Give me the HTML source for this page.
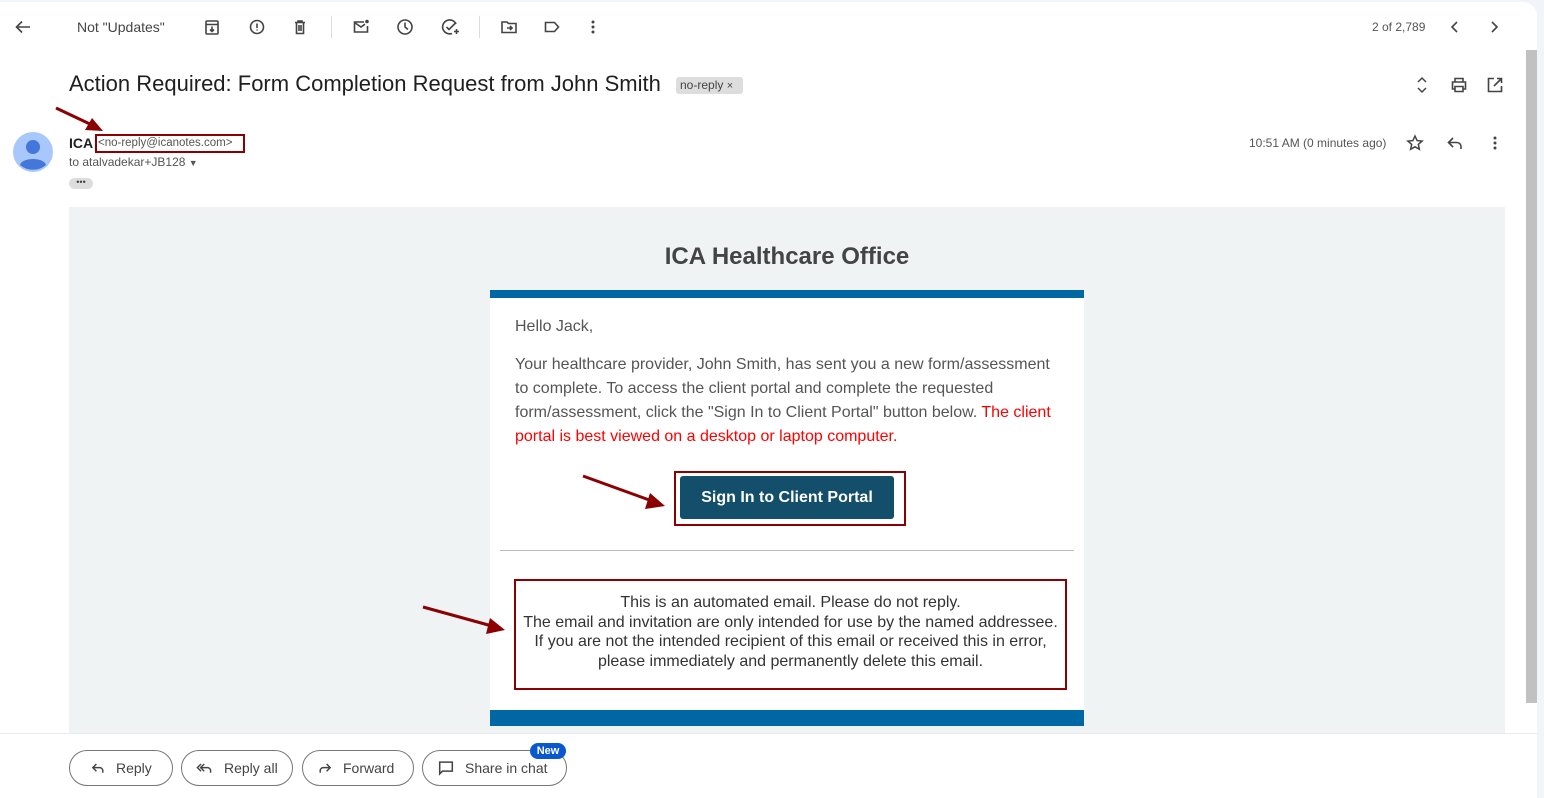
<!DOCTYPE html>
<html><head><meta charset="utf-8"><style>
*{box-sizing:border-box;margin:0;padding:0}
body{width:1544px;height:798px;overflow:hidden;background:#f1f4f9;font-family:"Liberation Sans",Arial,sans-serif;position:relative}
.a{position:absolute}
.panel{left:0;top:2px;width:1537px;height:796px;background:#fff;border-top-right-radius:14px}
.ic{position:absolute;width:20px;height:20px}
.t{white-space:nowrap;position:absolute}
.btn{position:absolute;top:750px;height:36px;border:1px solid #747775;border-radius:18px;font-size:14px;color:#444;display:flex;align-items:center;padding-left:20px}
.btn svg{margin-right:10px}
</style></head><body>
<div class="a panel"></div>
<div class="a" style="left:1526px;top:50px;width:11px;height:653px;background:#c1c1c1"></div>

<!-- toolbar -->
<svg class="ic" style="left:13px;top:17px" viewBox="0 0 20 20"><path d="M17 10H4M9 4.5L3.5 10 9 15.5" stroke="#444" stroke-width="1.6" fill="none"/></svg>
<div class="t" style="left:77px;top:19px;font-size:14px;color:#444">Not "Updates"</div>
<svg class="ic" style="left:202px;top:17px" viewBox="0 0 20 20" fill="none" stroke="#444" stroke-width="1.6"><rect x="4" y="4" width="12" height="13" rx="1"/><path d="M4 7.5h12M10 9.5v5M8 12.5l2 2 2-2"/></svg>
<svg class="ic" style="left:247px;top:17px" viewBox="0 0 20 20" fill="none" stroke="#444" stroke-width="1.6"><circle cx="10" cy="10" r="6.5"/><path d="M10 6.5v4.5M10 12.5v1"/></svg>
<svg class="ic" style="left:290px;top:17px" viewBox="0 0 20 20" fill="none" stroke="#444" stroke-width="1.6"><path d="M5 5.5h10M8 5.5V4h4v1.5M6.5 5.5v11h7v-11M9 8v6M11 8v6"/></svg>
<div class="a" style="left:331px;top:16px;width:1px;height:22px;background:#ddd"></div>
<svg class="ic" style="left:351px;top:17px" viewBox="0 0 20 20" fill="none" stroke="#444" stroke-width="1.6"><path d="M13 5H3.5v10h13V9"/><path d="M3.5 5.5l6.5 4.5 4-2.8"/><circle cx="16" cy="4.5" r="1.8" fill="#444" stroke="none"/></svg>
<svg class="ic" style="left:395px;top:17px" viewBox="0 0 20 20" fill="none" stroke="#444" stroke-width="1.6"><circle cx="10" cy="10" r="7"/><path d="M10 5.5V10l3 2.5"/></svg>
<svg class="ic" style="left:440px;top:17px" viewBox="0 0 20 20" fill="none" stroke="#444" stroke-width="1.6"><path d="M16 7A7 7 0 1 0 12 16.5"/><path d="M6.5 10l2.5 2.5 7-7M14 14.5h5M16.5 12v5"/></svg>
<div class="a" style="left:479px;top:16px;width:1px;height:22px;background:#ddd"></div>
<svg class="ic" style="left:499px;top:17px" viewBox="0 0 20 20" fill="none" stroke="#444" stroke-width="1.6"><path d="M3 5h5l1.5 1.5H17v9H3z"/><path d="M8 11h5M11 9l2 2-2 2"/></svg>
<svg class="ic" style="left:542px;top:17px" viewBox="0 0 20 20" fill="none" stroke="#444" stroke-width="1.6"><path d="M3.5 5.5h9l4 4.5-4 4.5h-9z"/></svg>
<svg class="ic" style="left:583px;top:17px" viewBox="0 0 20 20" fill="#444"><circle cx="10" cy="5" r="1.5"/><circle cx="10" cy="10" r="1.5"/><circle cx="10" cy="15" r="1.5"/></svg>
<div class="t" style="left:1372px;top:20px;font-size:12px;color:#555">2 of 2,789</div>
<svg class="ic" style="left:1445px;top:17px" viewBox="0 0 20 20" fill="none" stroke="#444" stroke-width="1.6"><path d="M12 5l-5 5 5 5"/></svg>
<svg class="ic" style="left:1484px;top:17px" viewBox="0 0 20 20" fill="none" stroke="#444" stroke-width="1.6"><path d="M8 5l5 5-5 5"/></svg>

<!-- subject -->
<div class="t" style="left:69px;top:71px;font-size:22px;color:#1f1f1f">Action Required: Form Completion Request from John Smith</div>
<div class="t" style="left:676px;top:77px;height:17px;width:67px;background:#ddd;border-radius:3px;font-size:12px;color:#444;padding:1px 4px">no-reply <span style="font-size:11px">×</span></div>
<svg class="ic" style="left:1412px;top:75px" viewBox="0 0 20 20" fill="none" stroke="#444" stroke-width="1.5"><path d="M6 7l4-4 4 4M6 13l4 4 4-4"/></svg>
<svg class="ic" style="left:1449px;top:75px" viewBox="0 0 20 20" fill="none" stroke="#444" stroke-width="1.6"><path d="M6 7V3.5h8V7M6 14H3.5V7h13v7H14M6 11.5h8v5H6z"/></svg>
<svg class="ic" style="left:1485px;top:75px" viewBox="0 0 20 20" fill="none" stroke="#444" stroke-width="1.6"><path d="M9 3.5H3.5v13h13V11M12 3.5h4.5V8M16.5 3.5L9 11"/></svg>

<!-- sender -->
<svg class="a" style="left:13px;top:132px" width="40" height="40" viewBox="0 0 40 40"><circle cx="20" cy="20" r="20" fill="#a8c7fa"/><circle cx="20" cy="15" r="7" fill="#4477d9"/><path d="M7 33c2-8 24-8 26 0a20 20 0 0 1-26 0z" fill="#4477d9"/></svg>
<div class="t" style="left:69px;top:135px;font-size:14px;font-weight:bold;color:#1f1f1f">ICA</div>
<div class="t" style="left:95px;top:134px;width:150px;height:19px;border:2px solid #8b0000;font-size:11.5px;color:#555;padding:1px 0 0 1px">&lt;no-reply@icanotes.com&gt;</div>
<div class="t" style="left:69px;top:155px;font-size:12px;color:#555">to atalvadekar+JB128 <span style="font-size:9px">▼</span></div>
<div class="a" style="left:69px;top:178px;width:24px;height:11px;background:#ddd;border-radius:6px;font-size:9px;color:#444;text-align:center;line-height:8px">•••</div>
<div class="t" style="left:1249px;top:136px;font-size:12px;color:#555">10:51 AM (0 minutes ago)</div>
<svg class="ic" style="left:1405px;top:133px" viewBox="0 0 20 20" fill="none" stroke="#444" stroke-width="1.5"><path d="M10 3l2.1 4.6 5 .5-3.8 3.3 1.1 4.9L10 13.8 5.6 16.3l1.1-4.9L2.9 8.1l5-.5z"/></svg>
<svg class="ic" style="left:1445px;top:133px" viewBox="0 0 20 20" fill="none" stroke="#444" stroke-width="1.6"><path d="M8 5L3.5 9.5 8 14M4 9.5h8a4 4 0 0 1 4 4V16"/></svg>
<svg class="ic" style="left:1485px;top:133px" viewBox="0 0 20 20" fill="#444"><circle cx="10" cy="5" r="1.5"/><circle cx="10" cy="10" r="1.5"/><circle cx="10" cy="15" r="1.5"/></svg>

<!-- email body -->
<div class="a" style="left:69px;top:207px;width:1436px;height:526px;background:#f0f3f4"></div>
<div class="t" style="left:490px;width:594px;top:243px;text-align:center;font-size:24px;font-weight:bold;color:#444">ICA Healthcare Office</div>
<div class="a" style="left:490px;top:290px;width:594px;height:436px;background:#fff;border-top:8px solid #0067a5"></div>
<div class="a" style="left:490px;top:710px;width:594px;height:16px;background:#0067a5"></div>
<div class="a" style="left:515px;top:315px;width:550px;font-size:16px;line-height:24px;color:#555">Hello Jack,</div>
<div class="a" style="left:515px;top:353px;width:550px;font-size:16px;line-height:24px;color:#555">Your healthcare provider, John Smith, has sent you a new form/assessment to complete. To access the client portal and complete the requested form/assessment, click the "Sign In to Client Portal" button below. <span style="color:#f00">The client portal is best viewed on a desktop or laptop computer.</span></div>
<div class="a" style="left:674px;top:471px;width:232px;height:55px;border:2px solid #8b0000"></div>
<div class="a" style="left:680px;top:476px;width:214px;height:43px;background:#134e6b;border-radius:3px;color:#fff;font-weight:bold;font-size:16px;text-align:center;line-height:43px">Sign In to Client Portal</div>
<div class="a" style="left:500px;top:550px;width:574px;height:1px;background:#bbb"></div>
<div class="a" style="left:514px;top:579px;width:553px;height:111px;border:2px solid #8b0000;text-align:center;font-size:16px;line-height:19.5px;color:#333;padding-top:12px">This is an automated email. Please do not reply.<br>The email and invitation are only intended for use by the named addressee.<br>If you are not the intended recipient of this email or received this in error,<br>please immediately and permanently delete this email.</div>

<!-- arrows -->
<svg class="a" style="left:0;top:0" width="1544" height="798">
<g stroke="#8b0000" stroke-width="3" fill="#8b0000">
<line x1="56" y1="108" x2="92" y2="125"/><polygon points="103,131 85,130 92,118" stroke="none"/>
<line x1="583" y1="476" x2="652" y2="501"/><polygon points="665,506 645,509 650,493" stroke="none"/>
<line x1="423" y1="607" x2="492" y2="626"/><polygon points="505,630 486,634 490,618" stroke="none"/>
</g></svg>

<!-- bottom -->
<div class="a" style="left:0;top:733px;width:1537px;height:1px;background:#e8eaed"></div>
<div class="btn" style="left:69px;width:104px"><svg width="16" height="16" viewBox="0 0 20 20" fill="none" stroke="#444" stroke-width="1.8"><path d="M8 5L3.5 9.5 8 14M4 9.5h8a4 4 0 0 1 4 4V16"/></svg>Reply</div>
<div class="btn" style="left:181px;width:112px;padding-left:14px"><svg width="18" height="16" viewBox="0 0 22 20" fill="none" stroke="#444" stroke-width="1.8"><path d="M6 5L1.5 9.5 6 14M10 5L5.5 9.5 10 14M6 9.5h8a4 4 0 0 1 4 4V16"/></svg>Reply all</div>
<div class="btn" style="left:302px;width:112px;padding-left:14px"><svg width="16" height="16" viewBox="0 0 20 20" fill="none" stroke="#444" stroke-width="1.8"><path d="M12 5l4.5 4.5L12 14M16 9.5H8a4 4 0 0 0-4 4V16"/></svg>Forward</div>
<div class="btn" style="left:422px;width:145px;padding-left:14px"><svg width="18" height="18" viewBox="0 0 20 20" fill="none" stroke="#444" stroke-width="1.7"><path d="M3 3.5h14v10H6l-3 3z"/></svg>Share in chat</div>
<div class="a" style="left:530px;top:743px;width:36px;height:16px;background:#0b57d0;border-radius:8px;color:#fff;font-size:11px;font-weight:bold;text-align:center;line-height:16px">New</div>
</body></html>
